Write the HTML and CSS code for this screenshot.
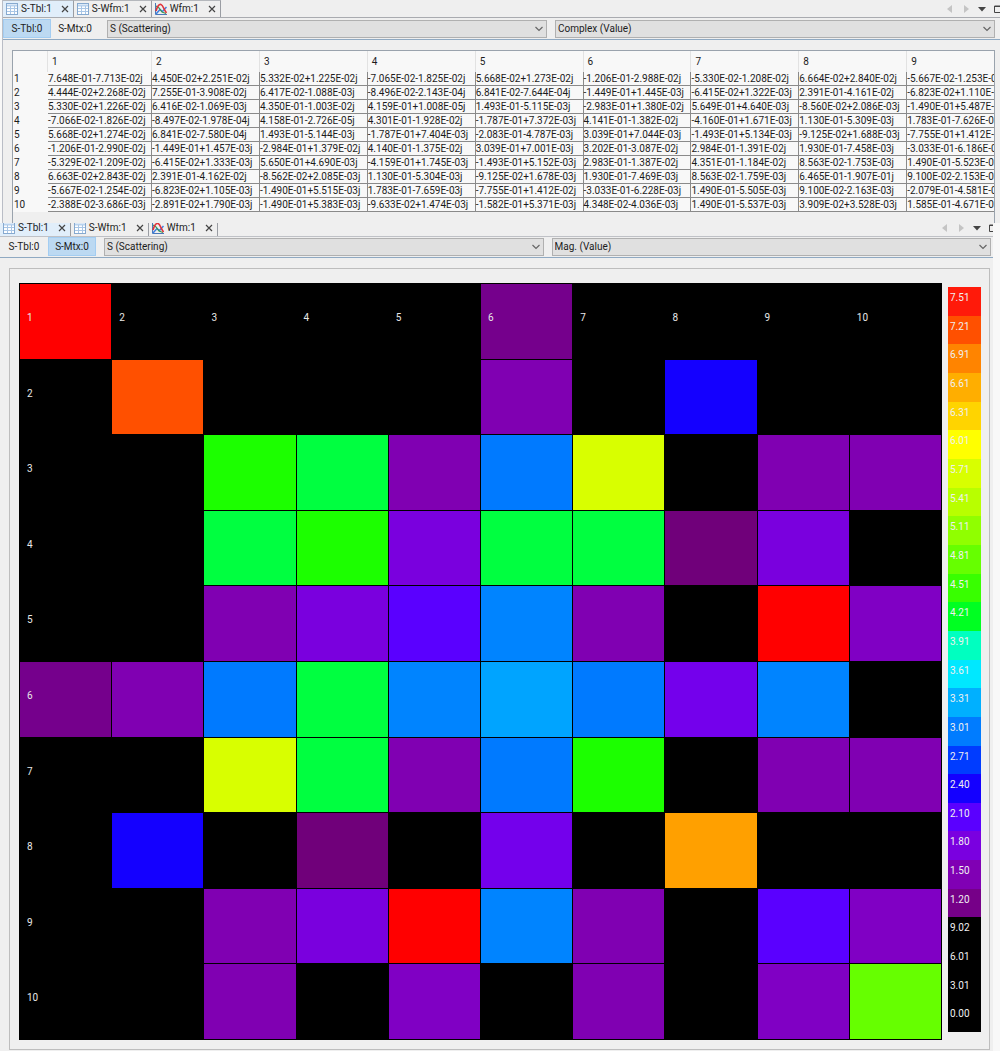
FILE: index.html
```html
<!DOCTYPE html>
<html lang="en">
<head>
<meta charset="utf-8">
<title>S-Parameter Viewer</title>
<link rel="stylesheet" href="styles.css">
</head>
<body>
<svg class="defs" aria-hidden="true">
  <symbol id="i-table" viewBox="0 0 12 12">
    <rect x=".5" y=".5" width="11" height="11" fill="#fdfeff" stroke="#86a9cf"/>
    <path d="M1 2.5h10" stroke="#b9d3ee" stroke-width="2"/>
    <path d="M1 5.5h10M1 8.5h10M4.5 3v8M8.500 3v8" stroke="#a9c6e6" fill="none"/>
  </symbol>
  <symbol id="i-wave" viewBox="0 0 12 12">
    <path d="M.5 0v11.500H12" stroke="#4b79b8" fill="none"/>
    <path d="M1 11 5 6.500 7.500 8.500 11.500 4" stroke="#3f7fe0" stroke-width="1.500" fill="none"/>
    <path d="M1 3 4 5 7 9 11 10.500" stroke="#3a9a55" stroke-width="1.200" fill="none"/>
    <path d="M1 8C2.500 3 4 1 6 1.500S8.500 6 11.500 10" stroke="#e0343c" stroke-width="1.700" fill="none"/>
  </symbol>
  <symbol id="i-close" viewBox="0 0 8 8"><path d="M1 1l6 6M7 1l-6 6" stroke="#444" stroke-width="1.200" fill="none"/></symbol>
  <symbol id="i-chev" viewBox="0 0 8 6"><path d="M.5 1 4 4.500 7.500 1" stroke="#666" stroke-width="1.200" fill="none"/></symbol>
  <symbol id="i-left" viewBox="0 0 8 8"><path d="M6 0v8L1 4z" fill="#c4c4c4"/></symbol>
  <symbol id="i-right" viewBox="0 0 8 8"><path d="M2 0v8l5-4z" fill="#c4c4c4"/></symbol>
  <symbol id="i-down" viewBox="0 0 8 8"><path d="M0 2h8L4 6.500z" fill="#444"/></symbol>
  <symbol id="i-win" viewBox="0 0 8 8"><path d="M.5 7.500V1H8M.5 7.500H8M0 1.500h8" stroke="#444" fill="none"/></symbol>
</svg>

<section class="window window-table">
  <header class="tabbar">
    <div class="tab active"><svg class="ico"><use href="#i-table"/></svg><button class="name">S-Tbl:1</button><button class="close" aria-label="Close S-Tbl:1"><svg><use href="#i-close"/></svg></button></div>
    <div class="tab"><svg class="ico"><use href="#i-table"/></svg><button class="name">S-Wfm:1</button><button class="close" aria-label="Close S-Wfm:1"><svg><use href="#i-close"/></svg></button></div>
    <div class="tab"><svg class="ico"><use href="#i-wave"/></svg><button class="name">Wfm:1</button><button class="close" aria-label="Close Wfm:1"><svg><use href="#i-close"/></svg></button></div>
    <nav class="tabnav">
      <button aria-label="Previous tab"><svg><use href="#i-left"/></svg></button>
      <button aria-label="Next tab"><svg><use href="#i-right"/></svg></button>
      <button aria-label="Tab list"><svg><use href="#i-down"/></svg></button>
      <button aria-label="Maximize"><svg><use href="#i-win"/></svg></button>
    </nav>
  </header>
  <div class="toolbar">
    <div class="toggles"><button class="toggle on">S-Tbl:0</button><button class="toggle">S-Mtx:0</button></div>
    <div class="combo"><select aria-label="Parameter"><option>S (Scattering)</option></select><svg><use href="#i-chev"/></svg></div>
    <div class="combo"><select aria-label="Format"><option>Complex (Value)</option></select><svg><use href="#i-chev"/></svg></div>
  </div>
  <div class="sheet">
    <table>
      <colgroup><col class="c-head"><col class="c-first"><col><col><col><col><col><col><col><col></colgroup>
      <thead><tr><th></th><th>1</th><th>2</th><th>3</th><th>4</th><th>5</th><th>6</th><th>7</th><th>8</th><th>9</th></tr></thead>
      <tbody>
        <tr><th>1</th><td>7.648E-01-7.713E-02j</td><td>4.450E-02+2.251E-02j</td><td>5.332E-02+1.225E-02j</td><td>-7.065E-02-1.825E-02j</td><td>5.668E-02+1.273E-02j</td><td>-1.206E-01-2.988E-02j</td><td>-5.330E-02-1.208E-02j</td><td>6.664E-02+2.840E-02j</td><td>-5.667E-02-1.253E-02j</td></tr>
        <tr><th>2</th><td>4.444E-02+2.268E-02j</td><td>7.255E-01-3.908E-02j</td><td>6.417E-02-1.088E-03j</td><td>-8.496E-02-2.143E-04j</td><td>6.841E-02-7.644E-04j</td><td>-1.449E-01+1.445E-03j</td><td>-6.415E-02+1.322E-03j</td><td>2.391E-01-4.161E-02j</td><td>-6.823E-02+1.110E-03j</td></tr>
        <tr><th>3</th><td>5.330E-02+1.226E-02j</td><td>6.416E-02-1.069E-03j</td><td>4.350E-01-1.003E-02j</td><td>4.159E-01+1.008E-05j</td><td>1.493E-01-5.115E-03j</td><td>-2.983E-01+1.380E-02j</td><td>5.649E-01+4.640E-03j</td><td>-8.560E-02+2.086E-03j</td><td>-1.490E-01+5.487E-03j</td></tr>
        <tr><th>4</th><td>-7.066E-02-1.826E-02j</td><td>-8.497E-02-1.978E-04j</td><td>4.158E-01-2.726E-05j</td><td>4.301E-01-1.928E-02j</td><td>-1.787E-01+7.372E-03j</td><td>4.141E-01-1.382E-02j</td><td>-4.160E-01+1.671E-03j</td><td>1.130E-01-5.309E-03j</td><td>1.783E-01-7.626E-03j</td></tr>
        <tr><th>5</th><td>5.668E-02+1.274E-02j</td><td>6.841E-02-7.580E-04j</td><td>1.493E-01-5.144E-03j</td><td>-1.787E-01+7.404E-03j</td><td>-2.083E-01-4.787E-03j</td><td>3.039E-01+7.044E-03j</td><td>-1.493E-01+5.134E-03j</td><td>-9.125E-02+1.688E-03j</td><td>-7.755E-01+1.412E-02j</td></tr>
        <tr><th>6</th><td>-1.206E-01-2.990E-02j</td><td>-1.449E-01+1.457E-03j</td><td>-2.984E-01+1.379E-02j</td><td>4.140E-01-1.375E-02j</td><td>3.039E-01+7.001E-03j</td><td>3.202E-01-3.087E-02j</td><td>2.984E-01-1.391E-02j</td><td>1.930E-01-7.458E-03j</td><td>-3.033E-01-6.186E-03j</td></tr>
        <tr><th>7</th><td>-5.329E-02-1.209E-02j</td><td>-6.415E-02+1.333E-03j</td><td>5.650E-01+4.690E-03j</td><td>-4.159E-01+1.745E-03j</td><td>-1.493E-01+5.152E-03j</td><td>2.983E-01-1.387E-02j</td><td>4.351E-01-1.184E-02j</td><td>8.563E-02-1.753E-03j</td><td>1.490E-01-5.523E-03j</td></tr>
        <tr><th>8</th><td>6.663E-02+2.843E-02j</td><td>2.391E-01-4.162E-02j</td><td>-8.562E-02+2.085E-03j</td><td>1.130E-01-5.304E-03j</td><td>-9.125E-02+1.678E-03j</td><td>1.930E-01-7.469E-03j</td><td>8.563E-02-1.759E-03j</td><td>6.465E-01-1.907E-01j</td><td>9.100E-02-2.153E-03j</td></tr>
        <tr><th>9</th><td>-5.667E-02-1.254E-02j</td><td>-6.823E-02+1.105E-03j</td><td>-1.490E-01+5.515E-03j</td><td>1.783E-01-7.659E-03j</td><td>-7.755E-01+1.412E-02j</td><td>-3.033E-01-6.228E-03j</td><td>1.490E-01-5.505E-03j</td><td>9.100E-02-2.163E-03j</td><td>-2.079E-01-4.581E-03j</td></tr>
        <tr><th>10</th><td>-2.388E-02-3.686E-03j</td><td>-2.891E-02+1.790E-03j</td><td>-1.490E-01+5.383E-03j</td><td>-9.633E-02+1.474E-03j</td><td>-1.582E-01+5.371E-03j</td><td>4.348E-02-4.036E-03j</td><td>1.490E-01-5.537E-03j</td><td>3.909E-02+3.528E-03j</td><td>1.585E-01-4.671E-03j</td></tr>
      </tbody>
    </table>
  </div>
</section>

<section class="window window-matrix">
  <header class="tabbar">
    <div class="tab active"><svg class="ico"><use href="#i-table"/></svg><button class="name">S-Tbl:1</button><button class="close" aria-label="Close S-Tbl:1"><svg><use href="#i-close"/></svg></button></div>
    <div class="tab"><svg class="ico"><use href="#i-table"/></svg><button class="name">S-Wfm:1</button><button class="close" aria-label="Close S-Wfm:1"><svg><use href="#i-close"/></svg></button></div>
    <div class="tab"><svg class="ico"><use href="#i-wave"/></svg><button class="name">Wfm:1</button><button class="close" aria-label="Close Wfm:1"><svg><use href="#i-close"/></svg></button></div>
    <nav class="tabnav">
      <button aria-label="Previous tab"><svg><use href="#i-left"/></svg></button>
      <button aria-label="Next tab"><svg><use href="#i-right"/></svg></button>
      <button aria-label="Tab list"><svg><use href="#i-down"/></svg></button>
      <button aria-label="Maximize"><svg><use href="#i-win"/></svg></button>
    </nav>
  </header>
  <div class="toolbar">
    <div class="toggles"><button class="toggle">S-Tbl:0</button><button class="toggle on">S-Mtx:0</button></div>
    <div class="combo"><select aria-label="Parameter"><option>S (Scattering)</option></select><svg><use href="#i-chev"/></svg></div>
    <div class="combo"><select aria-label="Format"><option>Mag. (Value)</option></select><svg><use href="#i-chev"/></svg></div>
  </div>
  <div class="plot">
    <div class="matrix">
      <i class="red">1</i><i>2</i><i>3</i><i>4</i><i>5</i><i class="plum">6</i><i>7</i><i>8</i><i>9</i><i>10</i>
      <i>2</i><i class="vermilion"></i><i></i><i></i><i></i><i class="purple"></i><i></i><i class="blue"></i><i></i><i></i>
      <i>3</i><i></i><i class="green"></i><i class="emerald"></i><i class="purple"></i><i class="azure"></i><i class="yellow"></i><i></i><i class="purple"></i><i class="purple"></i>
      <i>4</i><i></i><i class="emerald"></i><i class="green"></i><i class="violet"></i><i class="emerald"></i><i class="emerald"></i><i class="wine"></i><i class="violet"></i><i></i>
      <i>5</i><i></i><i class="purple"></i><i class="violet"></i><i class="indigo"></i><i class="sky"></i><i class="purple"></i><i></i><i class="red"></i><i class="orchid"></i>
      <i class="plum">6</i><i class="purple"></i><i class="azure"></i><i class="emerald"></i><i class="sky"></i><i class="cyan"></i><i class="azure"></i><i class="iris"></i><i class="sky"></i><i></i>
      <i>7</i><i></i><i class="yellow"></i><i class="emerald"></i><i class="purple"></i><i class="azure"></i><i class="green"></i><i></i><i class="purple"></i><i class="purple"></i>
      <i>8</i><i class="blue"></i><i></i><i class="wine"></i><i></i><i class="iris"></i><i></i><i class="orange"></i><i></i><i></i>
      <i>9</i><i></i><i class="purple"></i><i class="violet"></i><i class="red"></i><i class="sky"></i><i class="purple"></i><i></i><i class="indigo"></i><i class="orchid"></i>
      <i>10</i><i></i><i class="purple"></i><i></i><i class="orchid"></i><i></i><i class="purple"></i><i></i><i class="orchid"></i><i class="lime"></i>
    </div>
    <ol class="legend">
      <li class="s1">7.51</li><li class="s2">7.21</li><li class="s3">6.91</li><li class="s4">6.61</li><li class="s5">6.31</li><li class="s6">6.01</li><li class="s7">5.71</li><li class="s8">5.41</li><li class="s9">5.11</li><li class="s10">4.81</li><li class="s11">4.51</li><li class="s12">4.21</li><li class="s13">3.91</li><li class="s14">3.61</li><li class="s15">3.31</li><li class="s16">3.01</li><li class="s17">2.71</li><li class="s18">2.40</li><li class="s19">2.10</li><li class="s20">1.80</li><li class="s21">1.50</li><li class="s22">1.20</li><li>9.02</li><li>6.01</li><li>3.01</li><li>0.00</li>
    </ol>
  </div>
</section>
</body>
</html>
```
FILE: styles.css
```css
* { box-sizing: border-box; }
body {
  margin: 0;
  background: #f8f8f8;
  color: #1c1c1c;
  font: 10px/12px Roboto, "Noto Sans", sans-serif;
}
button, select {
  margin: 0;
  padding: 0;
  border: 0;
  background: none;
  color: inherit;
  font: inherit;
}
.defs { display: none; }
.window { background: #efefef; }
.window-table { margin-left: 3px; box-shadow: -1px 0 #b9bdc6; }
.window-matrix { margin-right: 7px; padding-bottom: 2px; }

/* document tabs */
.tabbar {
  display: flex;
  align-items: flex-end;
  height: 18px;
  overflow: hidden;
  border-bottom: 1px solid #a9abb0;
}
.window-matrix .tabbar { height: 14px; border-color: #bfc1c6; }
.tab {
  display: flex;
  flex: none;
  align-items: center;
  gap: 3px;
  height: 17px;
  padding: 0 4px 0 3px;
  border-right: 1px solid #9a9da3;
  border-top: 1px solid #b4b7bc;
}
.tab.active { background: #e1eefa; }
.ico { width: 12px; height: 12px; }
.close { margin-left: 6px; height: 8px; }
.close svg, .tabnav svg { display: block; width: 8px; height: 8px; }
.tabnav {
  display: flex;
  gap: 8px;
  height: 17px;
  margin: 0 -2px 0 auto;
  align-items: center;
}
.window-matrix .tabnav { margin-right: -4px; }
.tabnav button { height: 12px; }

/* view toolbar */
.toolbar {
  display: flex;
  gap: 8px;
  height: 22px;
  padding: 1px 5px 1px 0;
  border-bottom: 1px solid #8fa9c2;
}
.window-matrix .toolbar { height: 21px; padding: 0 2px 1px 0; }
.toggles { display: flex; }
.toggle { width: 48px; border: 1px solid transparent; }
.toggle.on { background: #bcd9f2; border-color: #a3cdf2; }
.combo { display: grid; flex: 1; align-items: center; }
.combo select, .combo svg { grid-area: 1 / 1; }
.combo select {
  width: 100%;
  height: 18px;
  padding: 0 2px;
  border: 1px solid #b0b0b0;
  border-radius: 0;
  background: #e0e0e0;
  appearance: none;
}
.combo svg {
  width: 8px;
  height: 6px;
  margin-right: 4px;
  justify-self: end;
  pointer-events: none;
}

/* value table */
.sheet {
  margin: 10px 5px 0 9px;
  padding-bottom: 11px;
  overflow: hidden;
  border: 1px solid #9aa3ad;
  border-bottom: 0;
}
.sheet table {
  width: 1002px;
  table-layout: fixed;
  border-collapse: separate;
  border-spacing: 0;
  background: #f8f8f8;
}
.c-head { width: 35px; }
.c-first { width: 104px; }
.sheet th { padding: 0 0 0 1px; font-weight: 400; text-align: left; }
.sheet thead th {
  height: 21px;
  padding-left: 4px;
  border-right: 1px solid #e2e2e2;
}
.sheet td {
  height: 14px;
  padding: 0;
  border-right: 1px solid #8a8a8a;
  border-bottom: 1px solid #8a8a8a;
  white-space: nowrap;
}

/* magnitude matrix */
.plot {
  display: flex;
  gap: 6px;
  margin: 10px 3px 0 9px;
  padding: 14px 8px 9px 9px;
  border: 1px solid #bdbdbd;
}
.matrix {
  display: grid;
  flex: 1;
  grid-template: repeat(10, 1fr) / repeat(10, 1fr);
  gap: 1px;
  padding: 1px;
  aspect-ratio: 923 / 757;
  background: #000;
  color: #e8e8e8;
}
.matrix i { padding: 28px 0 0 7px; font-style: normal; min-height: 0; }
.red { background: #ff0000; }
.vermilion { background: #ff5000; }
.orange { background: #ffa000; }
.yellow { background: #d8ff00; }
.lime { background: #66ff00; }
.green { background: #1cff00; }
.emerald { background: #00ff40; }
.cyan { background: #00a4ff; }
.sky { background: #0084ff; }
.azure { background: #007aff; }
.blue { background: #1400ff; }
.indigo { background: #5a00ff; }
.iris { background: #7400ec; }
.violet { background: #7a00de; }
.orchid { background: #8000c4; }
.purple { background: #8000b2; }
.plum { background: #75008c; }
.wine { background: #70007a; }

/* colour scale */
.legend {
  display: flex;
  flex-direction: column;
  width: 33px;
  margin: 4px 0 8px;
  padding: 0;
  background: #000;
  color: #f0f0f0;
  list-style: none;
}
.legend li { flex: 1; padding: 5px 0 0 2px; }
.s1 { background: #ff1a0a; }
.s2 { background: #ff5000; }
.s3 { background: #ff8400; }
.s4 { background: #ffae00; }
.s5 { background: #ffd400; }
.s6 { background: #ffff00; }
.s7 { background: #d8ff00; }
.s8 { background: #b8ff00; }
.s9 { background: #90ff00; }
.s10 { background: #66ff00; }
.s11 { background: #38ff00; }
.s12 { background: #00ff22; }
.s13 { background: #00ffc0; }
.s14 { background: #00e8ff; }
.s15 { background: #00b0ff; }
.s16 { background: #007cff; }
.s17 { background: #003cff; }
.s18 { background: #1400ff; }
.s19 { background: #5a00ff; }
.s20 { background: #7a00e0; }
.s21 { background: #8000b4; }
.s22 { background: #760088; }
```
